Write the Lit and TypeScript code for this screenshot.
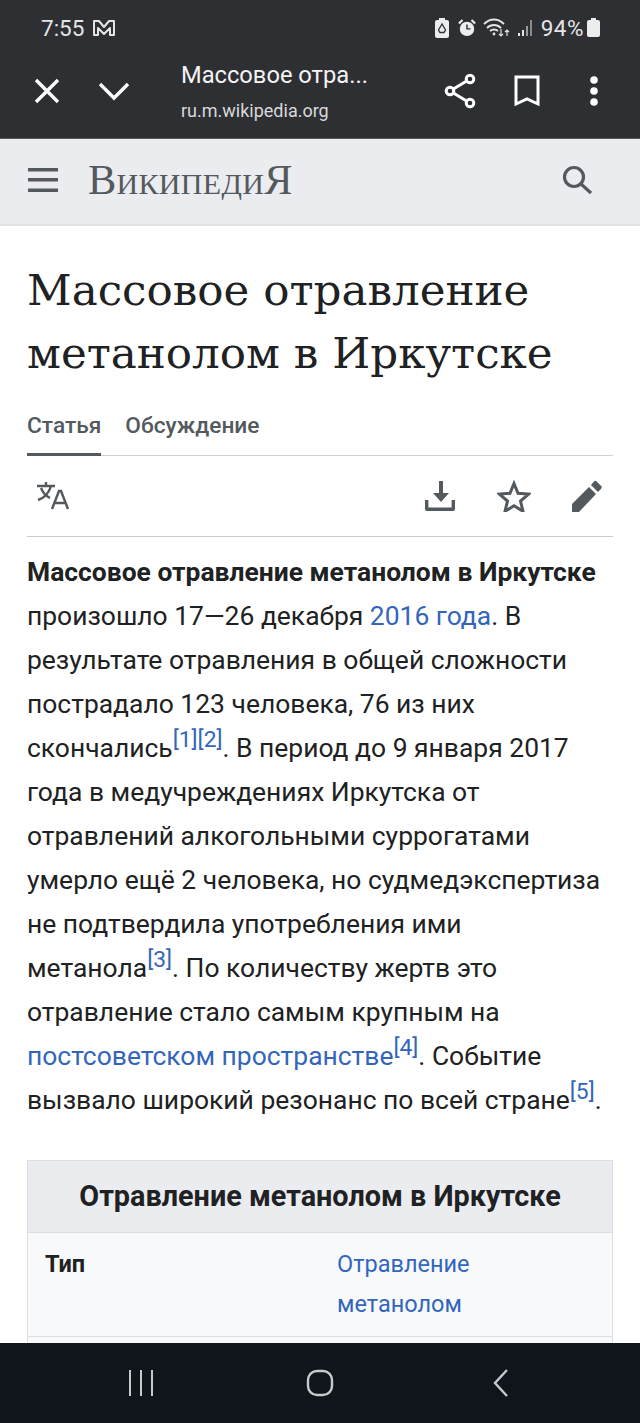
import { LitElement, html, css } from "lit";
import { customElement } from "lit/decorators.js";

@customElement("app-root")
export class AppRoot extends LitElement {
  static styles = css`
    :host { display: flex; flex-direction: column; width: 640px; height: 1423px; overflow: hidden; background: #fff; font-family: Roboto, "Liberation Sans", sans-serif; color: #202122; }
    svg { display: block; flex: none; }
    .chrome { height: 139px; flex: none; background: #2e2f33; color: #fff; display: flex; flex-direction: column; box-sizing: border-box; border-bottom: 1px solid #55575a; }
    .status { height: 55px; flex: none; display: flex; align-items: center; padding: 0 40px 0 41px; color: #e4e5e6; font-size: 22.5px; }
    .status .time { margin-right: 8px; }
    .grow { flex: 1; }
    .status .tray { display: flex; align-items: center; }
    .pct { margin-left: 7px; letter-spacing: 0.5px; }
    .toolbar { flex: 1; display: flex; align-items: flex-start; }
    .close { margin: 20px 0 0 31px; }
    .chev { margin: 20px 0 0 35px; }
    .titles { margin: 6px 0 0 51px; width: 247px; }
    .t1 { font-size: 23.7px; line-height: 28px; color: #f4f4f4; white-space: nowrap; }
    .t2 { font-size: 18px; line-height: 22px; margin-top: 11px; color: #d8d9da; }
    .share { margin: 18px 0 0 16px; }
    .mark { margin: 20px 0 0 38px; }
    .dots { margin: 20px 0 0 47px; }
    .header { height: 87px; flex: none; box-sizing: border-box; background: #eaecf0; border-bottom: 2px solid #e0e2e6; display: flex; align-items: center; padding: 0 48px 3px 27px; }
    .logo { margin-left: 29px; font-family: "Liberation Serif", serif; font-size: 42.4px; color: #54595d; font-variant: small-caps; letter-spacing: 0.3px; line-height: 1; }
    main { flex: 1; min-height: 0; overflow: hidden; padding: 0 27px; display: flex; flex-direction: column; }
    h1 { margin: 33px 0 0; flex: none; font-family: "DejaVu Serif", serif; font-weight: 400; font-size: 43.6px; line-height: 63px; color: #202122; white-space: nowrap; }
    .tabs { margin-top: 3px; height: 68px; flex: none; box-sizing: border-box; border-bottom: 1px solid #d0d2d5; display: flex; gap: 24px; }
    .tab { font-size: 22.7px; font-weight: 500; color: #54595d; box-sizing: border-box; height: 68px; padding-top: 25px; line-height: 26px; }
    .tab.on { border-bottom: 3px solid #54595d; }
    .tools { height: 81px; flex: none; box-sizing: border-box; border-bottom: 1px solid #c8ccd1; display: flex; align-items: center; padding: 0 10px 0 8px; }
    .tools .r { display: flex; align-items: center; gap: 40px; }
    .lead { margin: 13px 0 0; flex: none; font-size: 26.45px; line-height: 44px; white-space: nowrap; color: #202122; }
    a { color: #3366bb; text-decoration: none; }
    sup { font-size: 22.8px; line-height: 0; vertical-align: 10px; }
    .box { margin-top: 38px; flex: 1; border: 1px solid #dcdee2; border-bottom: 0; background: #f8f9fa; }
    .cap { height: 72px; box-sizing: border-box; background: #eaecf0; border-bottom: 1px solid #dcdee2; font-size: 28.8px; font-weight: 700; text-align: center; line-height: 71px; }
    .row { display: grid; grid-template-columns: 292px 1fr; padding: 11px 17px 12px 17px; font-size: 23.5px; line-height: 40px; border-bottom: 1px solid #dcdee2; }
    .row b { font-weight: 700; }
    .nav { height: 80px; flex: none; background: #0f151a; display: flex; align-items: center; }
    .back { margin-left: 158px; }
    .home { margin-left: 152px; }
    .rec { margin-left: 128px; }
    .tray .m9 { margin-left: 9px; }
    .tray .m7 { margin-left: 7px; }
    .tray .m5 { margin-left: 7px; }
    .tray .m3 { margin-left: 3px; }
  `;

  render() {
    return html`
      <div class="chrome">
        <div class="status">
          <span class="time">7:55</span>
          <svg width="24" height="20" viewBox="0 0 24 20" fill="none" stroke="#e4e5e6" stroke-width="2" stroke-linejoin="round"><path d="M2 3h5l5 6 5-6h5v14h-4V10l-6 6-6-6v7H2z"/></svg>
          <div class="grow"></div>
          <div class="tray">
            <svg width="14" height="20" viewBox="0 0 14 20"><path d="M4 0h6v2h2a2 2 0 0 1 2 2v14a2 2 0 0 1-2 2H2a2 2 0 0 1-2-2V4a2 2 0 0 1 2-2h2z" fill="#eceded"/><path d="M7 6l-3.500 6 1.500 2.500h4l1.500-2.500z" fill="none" stroke="#2e2f33" stroke-width="1.3"/></svg>
            <svg class="m9" width="18" height="20" viewBox="0 0 20 20"><circle cx="10" cy="11" r="8" fill="#eceded"/><path d="M1 5l4-4M19 5l-4-4" stroke="#eceded" stroke-width="2.4"/><path d="M10 6v5h4" fill="none" stroke="#2e2f33" stroke-width="1.6"/></svg>
            <svg class="m7" width="27" height="20" viewBox="0 0 27 20" fill="none" stroke="#e4e5e6" stroke-width="1.8"><path d="M1 6c6-6 14-6 20 0M4 10c4-4 10-4 14 0M7 13c2-2 6-2 8 0"/><circle cx="11" cy="16" r="1.4" fill="#e4e5e6" stroke="none"/><path d="M18 11v7M16 16l2 2 2-2M24 18v-6M22 14l2-2 2 2" stroke-width="1.2"/></svg>
            <svg class="m5" width="17" height="18" viewBox="0 0 17 18"><path d="M1 14h2v3H1z" fill="#e4e5e6"/><path d="M5 11h2v6H5z" fill="#e4e5e6"/><path d="M9 7h2v10H9z" fill="#9a9b9d"/><path d="M13 1h2v16h-2z" fill="#8a8b8d"/></svg>
            <span class="pct">94%</span>
            <svg class="m3" width="13" height="19" viewBox="0 0 13 19"><path d="M4 0h5v2h2a2 2 0 0 1 2 2v13a2 2 0 0 1-2 2H2a2 2 0 0 1-2-2V4a2 2 0 0 1 2-2h2z" fill="#eceded"/></svg>
          </div>
        </div>
        <div class="toolbar">
          <svg class="close" width="32" height="32" viewBox="0 0 32 32" stroke="#fff" stroke-width="3.4" fill="none"><path d="M5 5l22 22M27 5L5 27"/></svg>
          <svg class="chev" width="32" height="32" viewBox="0 0 32 32" stroke="#fff" stroke-width="3.4" fill="none"><path d="M2 9l14 14L30 9"/></svg>
          <div class="titles">
            <div class="t1">Массовое отра...</div>
            <div class="t2">ru.m.wikipedia.org</div>
          </div>
          <svg class="share" width="32" height="36" viewBox="0 0 32 36" fill="none" stroke="#fff" stroke-width="3"><circle cx="26" cy="6" r="3.8"/><circle cx="6" cy="18" r="3.8"/><circle cx="26" cy="30" r="3.8"/><path d="M9.4 16L22.6 8M9.4 20L22.6 28"/></svg>
          <svg class="mark" width="26" height="32" viewBox="0 0 26 32" fill="none" stroke="#fff" stroke-width="3"><path d="M2 2h22v27l-11-5-11 5z"/></svg>
          <svg class="dots" width="14" height="32" viewBox="0 0 14 32" fill="#fff"><circle cx="7" cy="5" r="3.8"/><circle cx="7" cy="16" r="3.8"/><circle cx="7" cy="27" r="3.8"/></svg>
        </div>
      </div>
      <div class="header">
        <svg width="32" height="26" viewBox="0 0 32 26" fill="#54595d"><path d="M1 1h30v3.4H1zM1 11h30v3.4H1zM1 21.600h30V25H1z"/></svg>
        <div class="logo">Википеди<span>Я</span></div>
        <div class="grow"></div>
        <svg width="30" height="30" viewBox="0 0 30 30" fill="none" stroke="#54595d" stroke-width="3.2"><circle cx="12" cy="12" r="9.500"/><path d="M19 19l10 9"/></svg>
      </div>
      <main>
        <h1>Массовое отравление<br />метанолом в Иркутске</h1>
        <div class="tabs"><div class="tab on">Статья</div><div class="tab">Обсуждение</div></div>
        <div class="tools">
          <svg width="36" height="34" viewBox="0 0 36 34" fill="none" stroke="#54595d" stroke-width="2.400"><path d="M2 7h18M11 3v4M16 7c-2 7-7 12-13 14M6 9c2 5 5 8 9 10"/><path d="M17 30l7-18h2l7 18M20 24h11"/></svg>
          <div class="grow"></div>
          <div class="r">
            <svg width="32" height="32" viewBox="0 0 32 32" fill="#54595d"><path d="M14 1h4v12h6l-8 9-8-9h6z"/><path d="M0 20v9a2 2 0 0 0 2 2h26a2 2 0 0 0 2-2v-9h-3.400v7.600H3.400V20z"/></svg>
            <svg width="34" height="32" viewBox="0 0 34 32" fill="none" stroke="#54595d" stroke-width="3"><path d="M17 3.500l4 9.800 10.500.8-8 6.900 2.500 10.300-9-5.500-9 5.500 2.500-10.300-8-6.900 10.500-.8z"/></svg>
            <svg width="32" height="32" viewBox="0 0 32 32" fill="#54595d"><path d="M1 32v-8L18 7l7 7L8 32z"/><path d="M20 5l3-3.500a1.800 1.800 0 0 1 2.600 0l4.600 4.600a1.800 1.800 0 0 1 0 2.600L27 12z"/></svg>
          </div>
        </div>
        <p class="lead"><b>Массовое отравление метанолом в Иркутске</b><br />произошло 17—26 декабря <a>2016 года</a>. В<br />результате отравления в общей сложности<br />пострадало 123 человека, 76 из них<br />скончались<sup><a>[1]</a></sup><sup><a>[2]</a></sup>. В период до 9 января 2017<br />года в медучреждениях Иркутска от<br />отравлений алкогольными суррогатами<br />умерло ещё 2 человека, но судмедэкспертиза<br />не подтвердила употребления ими<br />метанола<sup><a>[3]</a></sup>. По количеству жертв это<br />отравление стало самым крупным на<br /><a>постсоветском пространстве</a><sup><a>[4]</a></sup>. Событие<br />вызвало широкий резонанс по всей стране<sup><a>[5]</a></sup>.</p>
        <div class="box">
          <div class="cap">Отравление метанолом в Иркутске</div>
          <div class="row"><b>Тип</b><a>Отравление<br />метанолом</a></div>
        </div>
      </main>
      <div class="nav">
        <svg class="rec" width="26" height="28" viewBox="0 0 26 28" stroke="#c8c9ca" stroke-width="2" fill="none"><path d="M2 1v26M13 1v26M24 1v26"/></svg>
        <svg class="home" width="28" height="28" viewBox="0 0 28 28" stroke="#c8c9ca" stroke-width="2.400" fill="none"><rect x="2" y="2" width="24" height="24" rx="9"/></svg>
        <svg class="back" width="18" height="28" viewBox="0 0 18 28" stroke="#c8c9ca" stroke-width="2.400" fill="none"><path d="M15 1L3 14l12 13"/></svg>
      </div>
    `;
  }
}
